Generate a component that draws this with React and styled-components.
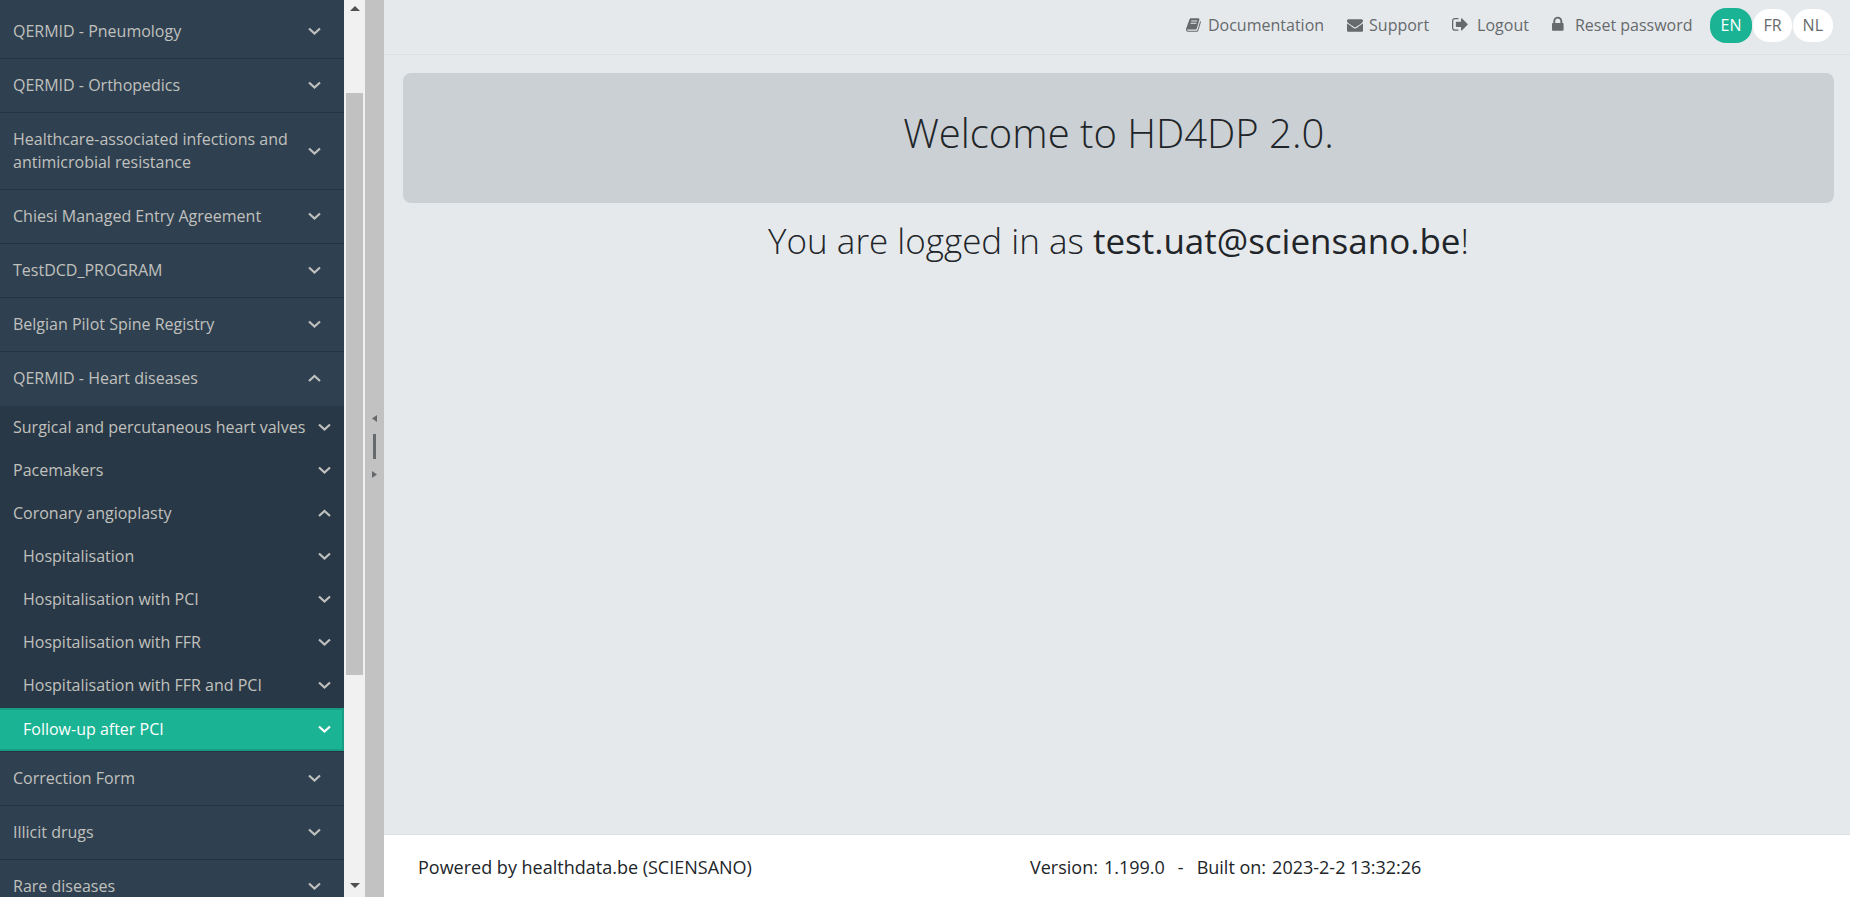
import React, { useState } from "react";
import styled, { createGlobalStyle } from "styled-components";

const GlobalStyle = createGlobalStyle`
  * {
    box-sizing: border-box;
  }

  body {
    margin: 0;
    font-family: "Open Sans", "Noto Sans", sans-serif;
    font-size: 16px;
    color: #212529;
  }
`;

const PageContainer = styled.div`
  display: flex;
  height: 100vh;
  overflow: hidden;
  background: #e5e9ec;
`;

const Sidebar = styled.nav`
  flex: 0 0 344px;
  overflow: hidden;
  padding-top: 5px;
  background: #2f4050;
`;

const MenuList = styled.ul`
  list-style: none;
  margin: 0;
  padding: 0;
`;

const SubMenu = styled(MenuList)`
  margin-top: 1px;
  background: #293846;
`;

const SubItem = styled.li`
  padding-top: ${(props) => (props.$active ? "1px" : "0")};
`;

const MenuItem = styled.li`
  border-bottom: 1px solid #263442;
`;

const MenuButton = styled.button`
  display: flex;
  align-items: center;
  justify-content: space-between;
  width: 100%;
  padding: 15px 23px 15px 13px;
  border: 0;
  background: none;
  color: #c0c1be;
  font: inherit;
  line-height: 23px;
  text-align: left;
  cursor: pointer;

  svg {
    flex-shrink: 0;
  }
`;

const SubButton = styled(MenuButton)`
  padding: 10px 13px 10px ${(props) => (props.$nested ? "23px" : "13px")};
  background: ${(props) => (props.$active ? "#1ab394" : "none")};
  color: ${(props) => (props.$active ? "#fff" : "#c0c1be")};
  box-shadow: ${(props) =>
    props.$active ? "inset -2px 0 0 #189d82, inset 0 2px 0 #189d82, inset 0 -2px 0 #189d82" : "none"};
`;

const ScrollTrack = styled.div`
  flex: 0 0 21px;
  display: flex;
  flex-direction: column;
  align-items: center;
  padding-bottom: 3px;
  background: #f1f1f1;
`;

const ScrollArrow = styled.div`
  display: flex;
  align-items: center;
  height: 17px;
`;

const ScrollSpace = styled.div`
  flex: ${(props) => props.$size};
`;

const ScrollThumb = styled.div`
  flex: 582;
  width: 17px;
  background: #c1c1c1;
`;

const Gutter = styled.div`
  flex: 0 0 19px;
  display: flex;
  flex-direction: column;
  align-items: center;
  justify-content: center;
  gap: 12px;
  padding-bottom: 4px;
  background: #c2c2c2;
`;

const GutterBar = styled.div`
  width: 3px;
  height: 25px;
  background: #676a6c;
`;

const Main = styled.div`
  flex: 1;
  min-width: 0;
  display: flex;
  flex-direction: column;
`;

const TopBar = styled.header`
  display: flex;
  align-items: center;
  justify-content: flex-end;
  height: 55px;
  padding: 0 17px 4px 0;
  border-bottom: 1px solid #dcdfe3;
`;

const TopLinks = styled.div`
  display: flex;
  gap: 23px;
  margin-right: 17px;
`;

const TopLink = styled.a`
  display: flex;
  align-items: center;
  gap: ${(props) => props.$gap}px;
  color: #676a6c;
  line-height: 22px;
  text-decoration: none;
`;

const LangButton = styled.button`
  height: ${(props) => (props.$active ? "35px" : "33px")};
  margin-left: ${(props) => (props.$active ? "0" : "1px")};
  padding: 0 ${(props) => (props.$active ? "11px" : "10px")};
  border: 0;
  border-radius: 16px;
  background: ${(props) => (props.$active ? "#1ab394" : "#fff")};
  color: ${(props) => (props.$active ? "#fff" : "#676a6c")};
  font: inherit;
  cursor: pointer;
`;

const Content = styled.main`
  flex: 1;
  padding: 18px 16px 0 19px;
  text-align: center;
`;

const Hero = styled.section`
  padding: 32px 32px 42px;
  border-radius: 8px;
  background: #cbd0d4;
`;

const Title = styled.h1`
  margin: 0;
  font-size: 40px;
  font-weight: 300;
  line-height: 56px;
`;

const LoggedIn = styled.h2`
  margin: 14px 0 0;
  font-size: 35px;
  font-weight: 300;
  line-height: 48px;

  strong {
    font-weight: 400;
  }
`;

const Footer = styled.footer`
  display: grid;
  grid-template-columns: 3fr 4fr;
  padding: 20px 19px 18px;
  border-top: 1px solid #dcdfe3;
  background: #fff;
  font-size: 18px;
  line-height: 24px;
`;

const FooterColumn = styled.div`
  display: flex;
  gap: 13px;
  padding-left: 15px;
`;

const Label = styled.span`
  margin-right: 6px;
`;

const chevrons = { down: "M1 1.5 L6.5 6.5 L12 1.5", up: "M1 7 L6.5 2 L12 7" };

function Chevron({ open }) {
  return (
    <svg width="13" height="9" viewBox="0 0 13 9" fill="none" stroke="currentColor" strokeWidth="2.2">
      <path d={open ? chevrons.up : chevrons.down} />
    </svg>
  );
}

function Triangle({ points, width, height, color }) {
  return (
    <svg width={width} height={height} viewBox={`0 0 ${width} ${height}`} fill={color}>
      <polygon points={points} />
    </svg>
  );
}

function Icon({ name, size }) {
  return (
    <svg width={size} height={size} viewBox={icons[name].box} fill="currentColor" aria-hidden="true">
      <path d={icons[name].path} />
    </svg>
  );
}

const icons = {
  book: {
    box: "0 0 1792 1792",
    path: "M1639 478q40 57 18 129l-275 906q-19 64-76.5 107.5t-122.5 43.5h-923q-77 0-148.5-53.5t-99.5-131.5q-24-67-2-127 0-4 3-27t4-37q1-8-3-21.5t-3-19.5q2-11 8-21t16.5-23.5 16.5-23.5q23-38 45-91.5t30-91.5q3-10 .5-30t-.5-28q3-11 17-28t17-23q21-36 42-92t25-90q1-9-2.5-32t.5-28q4-13 22-30.5t22-22.5q19-26 42.5-84.5t27.5-96.5q1-8-3-25.5t-2-26.5q2-8 9-18t18-23 17-21q8-12 16.5-30.5t15-35 16-36 19.5-32 26.5-23.5 36-11.5 47.5 5.5l-1 3q38-9 51-9h761q74 0 114 56t18 130l-274 906q-36 119-71.5 153.5t-128.5 34.5h-869q-27 0-38 15-11 16-1 43 24 70 144 70h923q29 0 56-15.5t35-41.5l300-987q7-22 5-57 38 15 59 43zm-1064 2q-4 13 2 22.5t20 9.5h608q13 0 25.5-9.5t16.5-22.5l21-64q4-13-2-22.5t-20-9.5h-608q-13 0-25.5 9.5t-16.5 22.5zm-83 256q-4 13 2 22.5t20 9.5h608q13 0 25.5-9.5t16.5-22.5l21-64q4-13-2-22.5t-20-9.5h-608q-13 0-25.5 9.5t-16.5 22.5z",
  },
  envelope: {
    box: "0 0 1792 1792",
    path: "M1792 710v794q0 66-47 113t-113 47h-1472q-66 0-113-47t-47-113v-794q44 49 101 87 362 246 497 345 57 42 92.5 65.5t94.5 48 110 24.5h2q51 0 110-24.5t94.5-48 92.5-65.5q170-123 498-345 57-39 100-87zm0-294q0 79-49 151t-122 123q-376 261-468 325-10 7-42.5 31t-54 38.5-52 32.5-57.5 27-50 9h-2q-23 0-50-9t-57.5-27-52-32.5-54-38.5-42.5-31q-91-64-262-182.5t-205-142.5q-62-42-117-115.5t-55-136.5q0-78 41.5-130t118.5-52h1472q65 0 112.5 47t47.5 113z",
  },
  signOut: {
    box: "64 64 1792 1792",
    path: "M704 1440q0 4 1 20t.5 26.5-3 23.5-10 19.5-20.5 6.5h-320q-119 0-203.5-84.5t-84.5-203.5v-704q0-119 84.5-203.5t203.5-84.5h320q13 0 22.5 9.5t9.5 22.5q0 4 1 20t.5 26.5-3 23.5-10 19.5-20.5 6.5h-320q-66 0-113 47t-47 113v704q0 66 47 113t113 47h312l11.5 1 11.5 3 8 5.5 7 9 2 13.5zm928-544q0 26-19 45l-544 544q-19 19-45 19t-45-19-19-45v-288h-448q-26 0-45-19t-19-45v-384q0-26 19-45t45-19h448v-288q0-26 19-45t45-19 45 19l544 544q19 19 19 45z",
  },
  lock: {
    box: "320 64 1792 1792",
    path: "M640 768h512v-192q0-106-75-181t-181-75-181 75-75 181v192zm832 96v576q0 40-28 68t-68 28h-960q-40 0-68-28t-28-68v-576q0-40 28-68t68-28h32v-192q0-184 132-316t316-132 316 132 132 316v192h32q40 0 68 28t28 68z",
  },
};

const links = [
  { icon: "book", label: "Documentation", size: 16, gap: 6 },
  { icon: "envelope", label: "Support", size: 16, gap: 6 },
  { icon: "signOut", label: "Logout", size: 18, gap: 7 },
  { icon: "lock", label: "Reset password", size: 18, gap: 5 },
];

const heartItems = [
  { label: "Surgical and percutaneous heart valves" },
  { label: "Pacemakers" },
  { label: "Coronary angioplasty", open: true },
  { label: "Hospitalisation", nested: true },
  { label: "Hospitalisation with PCI", nested: true },
  { label: "Hospitalisation with FFR", nested: true },
  { label: "Hospitalisation with FFR and PCI", nested: true },
  { label: "Follow-up after PCI", nested: true, active: true },
];

const menu = [
  { label: "QERMID - Pneumology" },
  { label: "QERMID - Orthopedics" },
  { label: "Healthcare-associated infections and antimicrobial resistance" },
  { label: "Chiesi Managed Entry Agreement" },
  { label: "TestDCD_PROGRAM" },
  { label: "Belgian Pilot Spine Registry" },
  { label: "QERMID - Heart diseases", children: heartItems },
  { label: "Correction Form" },
  { label: "Illicit drugs" },
  { label: "Rare diseases" },
];

function App() {
  const [lang, setLang] = useState("EN");

  return (
    <PageContainer>
      <GlobalStyle />
      <Sidebar>
        <MenuList>
          {menu.map((item) => (
            <MenuItem key={item.label}>
              <MenuButton>
                {item.label}
                <Chevron open={Boolean(item.children)} />
              </MenuButton>
              {item.children && (
                <SubMenu>
                  {item.children.map((sub) => (
                    <SubItem key={sub.label} $active={sub.active}>
                      <SubButton $nested={sub.nested} $active={sub.active}>
                        {sub.label}
                        <Chevron open={sub.open} />
                      </SubButton>
                    </SubItem>
                  ))}
                </SubMenu>
              )}
            </MenuItem>
          ))}
        </MenuList>
      </Sidebar>
      <ScrollTrack>
        <ScrollArrow>
          <Triangle points="0,5 5,0 10,5" width={10} height={5} color="#505050" />
        </ScrollArrow>
        <ScrollSpace $size={76} />
        <ScrollThumb />
        <ScrollSpace $size={202} />
        <ScrollArrow>
          <Triangle points="0,0 10,0 5,5" width={10} height={5} color="#505050" />
        </ScrollArrow>
      </ScrollTrack>
      <Gutter>
        <Triangle points="5,0 5,7 0,3.5" width={5} height={7} color="#676a6c" />
        <GutterBar />
        <Triangle points="0,0 5,3.5 0,7" width={5} height={7} color="#676a6c" />
      </Gutter>
      <Main>
        <TopBar>
          <TopLinks>
            {links.map((link) => (
              <TopLink href="#" key={link.label} $gap={link.gap}>
                <Icon name={link.icon} size={link.size} />
                {link.label}
              </TopLink>
            ))}
          </TopLinks>
          {["EN", "FR", "NL"].map((code) => (
            <LangButton key={code} $active={lang === code} onClick={() => setLang(code)}>
              {code}
            </LangButton>
          ))}
        </TopBar>
        <Content>
          <Hero>
            <Title>Welcome to HD4DP 2.0.</Title>
          </Hero>
          <LoggedIn>
            You are logged in as <strong>test.uat@sciensano.be</strong>!
          </LoggedIn>
        </Content>
        <Footer>
          <FooterColumn>Powered by healthdata.be (SCIENSANO)</FooterColumn>
          <FooterColumn>
            <span>
              <Label>Version:</Label>1.199.0
            </span>
            <span>-</span>
            <span>
              <Label>Built on:</Label>2023-2-2 13:32:26
            </span>
          </FooterColumn>
        </Footer>
      </Main>
    </PageContainer>
  );
}

export default App;
